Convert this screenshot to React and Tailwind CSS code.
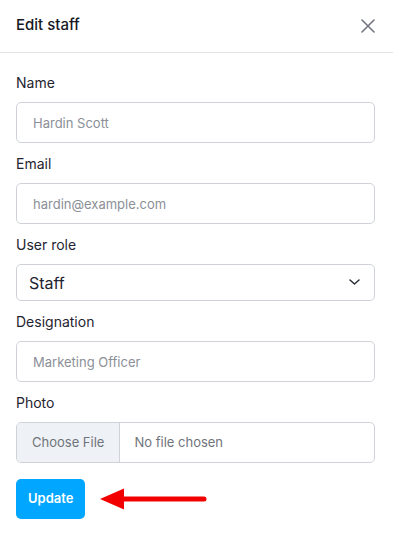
import { useState } from "react";

const labelClass = "mb-[9px] block text-[14px] leading-5 text-[#1f2430]";
const inputClass =
  "block h-[41px] w-full rounded-[5px] border border-[#cfd3d9] bg-white px-4 text-[13px] text-[#3a3f48] outline-none placeholder:text-[#8b8f98]";

const Field = ({ label, placeholder }) => (
  <div>
    <label className={labelClass}>{label}</label>
    <input type="text" placeholder={placeholder} className={inputClass} />
  </div>
);

const App = () => {
  const [role, setRole] = useState("staff");

  return (
    <div className="min-h-[535px] w-[393px] bg-white font-['Inter',sans-serif]">
      <header className="flex h-[53px] items-start justify-between border-b border-[#e3e4e8] pl-4 pr-[18px] pt-[14px]">
        <h2 className="text-[15px] font-medium leading-[22px] text-[#16191f]">Edit staff</h2>
        <button type="button" className="mt-[5px] text-[#72767e]" aria-label="Close">
          <svg width="14" height="14" viewBox="0 0 14 14" fill="none" stroke="currentColor" strokeWidth="1.6" strokeLinecap="round">
            <path d="M1 1l12 12M13 1L1 13" />
          </svg>
        </button>
      </header>

      <form className="flex flex-col gap-[11px] pl-4 pr-[18px] pt-5" onSubmit={(e) => e.preventDefault()}>
        <Field label="Name" placeholder="Hardin Scott" />
        <Field label="Email" placeholder="hardin@example.com" />

        <div>
          <label className={labelClass}>User role</label>
          <div className="relative">
            <select
              value={role}
              onChange={(e) => setRole(e.target.value)}
              className="block h-[37px] w-full appearance-none rounded-[5px] border border-[#cfd3d9] bg-white pl-3 text-[16px] text-[#1f2430] outline-none"
            >
              <option value="staff">Staff</option>
              <option value="admin">Admin</option>
            </select>
            <svg
              className="pointer-events-none absolute right-[15px] top-[15px] text-[#2a2e36]"
              width="11"
              height="6"
              viewBox="0 0 11 6"
              fill="none"
              stroke="currentColor"
              strokeWidth="1.5"
              strokeLinecap="round"
              strokeLinejoin="round"
            >
              <path d="M1 1l4.5 4 4.5-4" />
            </svg>
          </div>
        </div>

        <Field label="Designation" placeholder="Marketing Officer" />

        <div>
          <label className={labelClass}>Photo</label>
          <label className="flex h-[41px] w-full cursor-pointer items-stretch overflow-hidden rounded-[5px] border border-[#cfd3d9] text-[13px]">
            <input type="file" className="hidden" />
            <span className="flex items-center border-r border-[#cfd3d9] bg-[#eef1f5] px-[15px] text-[#6f747c]">Choose File</span>
            <span className="flex items-center pl-[14px] text-[#6f747c]">No file chosen</span>
          </label>
        </div>

        <div className="mt-[5px] flex items-center">
          <button
            type="submit"
            className="h-[40px] rounded-[5px] bg-[#00a6ff] px-[12px] text-[13px] font-semibold text-white"
          >
            Update
          </button>
          <svg className="ml-[15px]" width="107" height="22" viewBox="0 0 107 22" fill="none">
            <path d="M0 11L24 0.5V21.5Z" fill="#f20000" />
            <path d="M20 11H104" stroke="#f20000" strokeWidth="5" strokeLinecap="round" />
          </svg>
        </div>
      </form>
    </div>
  );
};

export default App;
